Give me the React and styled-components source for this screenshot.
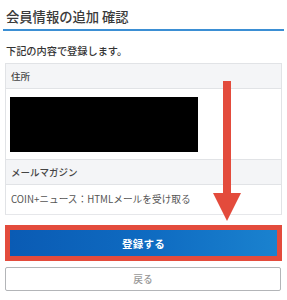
import React from "react";
import styled, { createGlobalStyle } from "styled-components";

const GlobalStyle = createGlobalStyle`
	body {
		margin: 0;
		background: #fff;
		font-family: "Noto Sans CJK JP", "Noto Sans", sans-serif;
		color: #333;
	}
`;

const StyledPage = styled.div`
	position: relative;
	width: 287px;
	height: 300px;
	box-sizing: border-box;
	padding: 0 3px;
	overflow: hidden;
`;

const StyledTitle = styled.h1`
	margin: 0;
	padding: 9px 3px 0;
	height: 20px;
	font-size: 13.3px;
	line-height: 15px;
	font-weight: 500;
	color: #3a3a3a;
	border-bottom: 2px solid #3b8fd4;
`;

const StyledLead = styled.p`
	margin: 0;
	padding: 13px 3px 0;
	height: 19px;
	font-size: 10.2px;
	line-height: 13px;
	font-weight: 500;
	color: #333;
`;

const StyledTable = styled.div`
	margin: 0 2px;
	border: 1px solid #e1e3e6;
	border-bottom-color: #e6e7ea;
`;

const StyledHead = styled.div`
	height: 24px;
	display: flex;
	align-items: center;
	padding: 0 5px;
	background: #f4f5f7;
	font-size: 9.5px;
	font-weight: 500;
	color: #444;
	border-bottom: 1px solid #e1e3e6;
	border-top: ${p => (p.$divided ? "1px solid #e1e3e6" : "none")};
`;

const StyledCell = styled.div`
	padding: ${p => p.$pad || "8px 4px"};
	font-size: 9.7px;
	color: #555;
	line-height: 13px;
`;

const StyledRedact = styled.div`
	width: 188px;
	height: 55px;
	background: #000;
`;

const StyledActions = styled.div`
	display: flex;
	flex-direction: column;
	gap: 6px;
	margin: 15px 2px 0;
`;

const StyledPrimary = styled.button`
	height: 26px;
	margin: 0 5px;
	border: none;
	outline: 5px solid #e34b3c;
	outline-offset: 0;
	background: linear-gradient(90deg, #0a5bb4 0%, #0f6cc2 55%, #1a82cf 100%);
	color: #fff;
	font-family: inherit;
	font-size: 10.5px;
	font-weight: 700;
	letter-spacing: 0.3px;
`;

const StyledSecondary = styled.button`
	height: 24px;
	margin: 5px 1px 0 0;
	border: 1px solid #b3b5b8;
	border-radius: 2px;
	background: #fff;
	color: #999;
	font-family: inherit;
	font-size: 9.7px;
	font-weight: 500;
`;

const StyledArrow = styled.svg`
	position: absolute;
	left: 212px;
	top: 81px;
	width: 30px;
	height: 141px;
`;

const Arrow = () => (
	<StyledArrow viewBox="0 0 30 141">
		<rect x="11" y="0" width="8" height="116" fill="#e34b3c" />
		<polygon points="1,112 29,112 15,140" fill="#e34b3c" />
	</StyledArrow>
);

const App = () => (
	<>
		<GlobalStyle />
		<StyledPage>
			<StyledTitle>会員情報の追加 確認</StyledTitle>
			<StyledLead>下記の内容で登録します。</StyledLead>
			<StyledTable>
				<StyledHead>住所</StyledHead>
				<StyledCell $pad="8px 4px 7px">
					<StyledRedact />
				</StyledCell>
				<StyledHead $divided>メールマガジン</StyledHead>
				<StyledCell $pad="8px 5px 8px">COIN+ニュース：HTMLメールを受け取る</StyledCell>
			</StyledTable>
			<StyledActions>
				<StyledPrimary>登録する</StyledPrimary>
				<StyledSecondary>戻る</StyledSecondary>
			</StyledActions>
			<Arrow />
		</StyledPage>
	</>
);

export default App;
